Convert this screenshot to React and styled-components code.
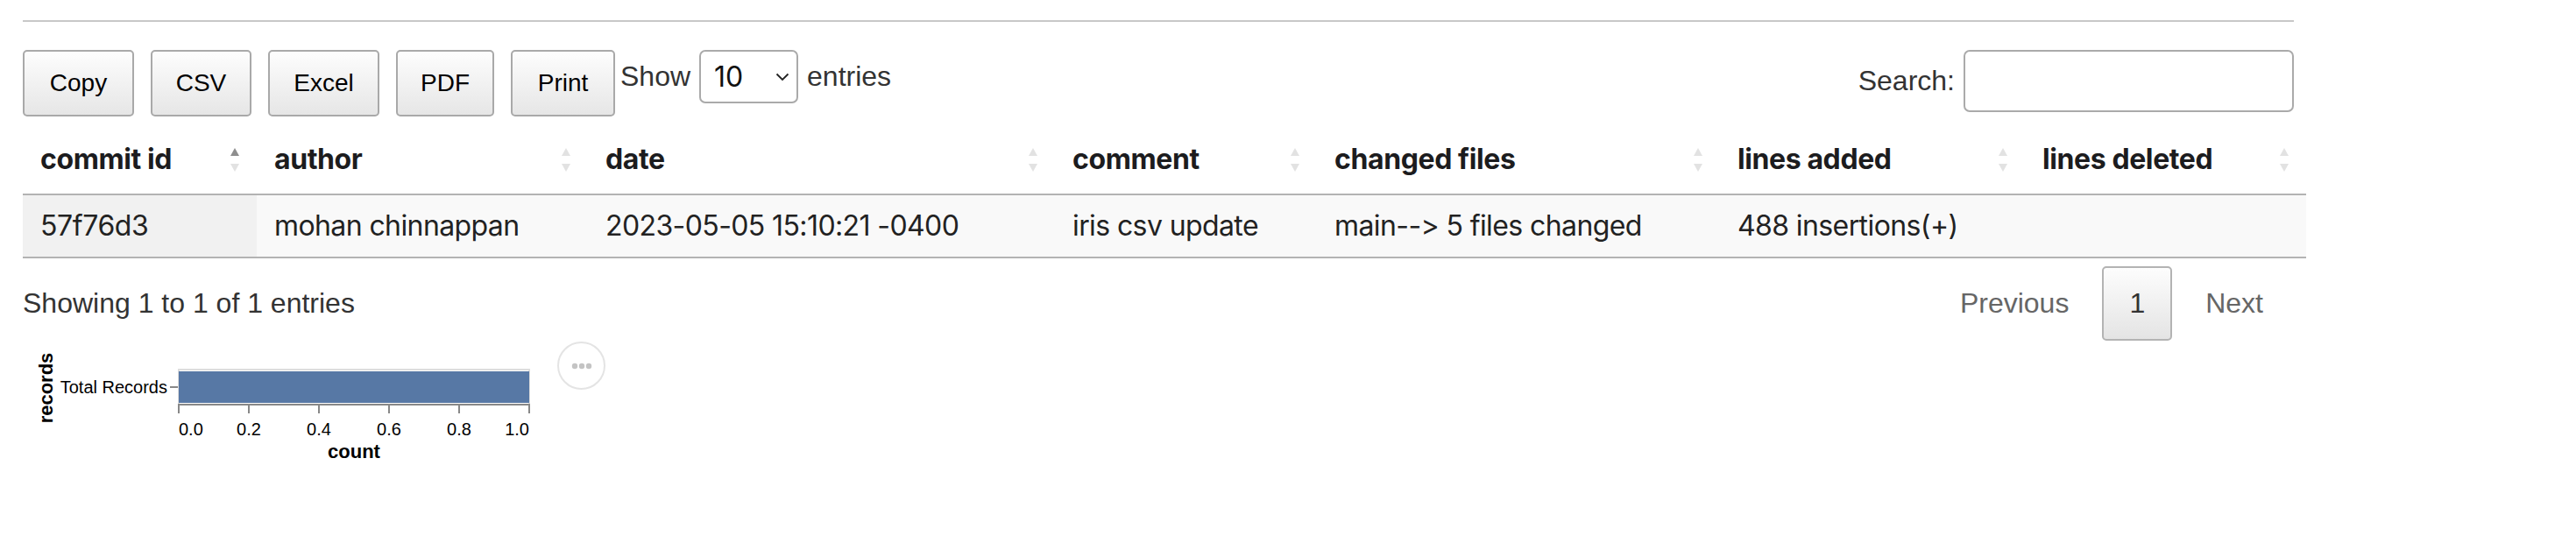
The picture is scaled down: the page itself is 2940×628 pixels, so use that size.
import React from 'react';
import styled, { createGlobalStyle } from 'styled-components';

const GlobalStyle = createGlobalStyle`
  html, body {
    margin: 0;
    padding: 0;
    background: #ffffff;
  }
  body {
    font-family: 'Liberation Sans', Arial, Helvetica, sans-serif;
    font-size: 32px;
    color: #333333;
  }
  * {
    box-sizing: border-box;
  }
`;

const Page = styled.div`
  width: 2592px;
  margin: 0 26px;
  padding-top: 23px;
`;

const Rule = styled.div`
  height: 2px;
  background: #c8c8c8;
`;

const Toolbar = styled.div`
  display: flex;
  justify-content: space-between;
  align-items: flex-start;
  margin-top: 32px;
`;

const LeftTools = styled.div`
  display: flex;
  align-items: flex-start;
`;

const ButtonGroup = styled.div`
  display: flex;
  gap: 19px;
  margin-right: 6px;
`;

const ExportButton = styled.button`
  width: ${props => props.width}px;
  font-family: 'Liberation Sans', Arial, Helvetica, sans-serif;
  font-size: 28px;
  line-height: 32px;
  color: #000000;
  padding: 20px 0;
  text-align: center;
  border: 2px solid #a9a9a9;
  border-radius: 5px;
  background: linear-gradient(to bottom, #fdfdfd 0%, #e6e6e6 100%);
  cursor: pointer;
`;

const LengthLabel = styled.label`
  display: flex;
  align-items: center;
  gap: 10px;
  height: 61px;
  color: #333333;
`;

const SelectBox = styled.div`
  display: flex;
  align-items: center;
  justify-content: space-between;
  width: 113px;
  height: 61px;
  padding: 0 8px 0 15px;
  border: 2px solid #aaaaaa;
  border-radius: 7px;
  background: #ffffff;
  font-family: Inter, 'Noto Sans', sans-serif;
  font-size: 32px;
  color: #111111;
`;

const SearchLabel = styled.label`
  display: flex;
  align-items: center;
  gap: 10px;
  color: #333333;
`;

const SearchInput = styled.input`
  width: 377px;
  height: 71px;
  border: 2px solid #aaaaaa;
  border-radius: 7px;
  padding: 6px 10px;
  font-size: 28px;
  background: #ffffff;
`;

const Table = styled.table`
  width: 2606px;
  margin-top: 10px;
  border-collapse: collapse;
  border-spacing: 0;
  table-layout: fixed;
  font-family: Inter, 'Noto Sans', sans-serif;
  font-size: 32px;
  letter-spacing: -0.4px;
  font-variant-ligatures: none;
  font-feature-settings: 'calt' 0, 'liga' 0;
  border-bottom: 2px solid #b3b3b3;
`;

const HeadCell = styled.th`
  width: ${props => props.width}px;
  padding: 20px 20px;
  line-height: 38px;
  text-align: left;
  font-weight: 700;
  color: #1c1c1e;
  border-bottom: 2px solid #b3b3b3;
`;

const HeadInner = styled.div`
  display: flex;
  align-items: center;
  justify-content: space-between;
`;

const SortIcon = styled.svg`
  flex: none;
  width: 10px;
  height: 27px;
`;

const Row = styled.tr`
  background: #f9f9f9;
`;

const Cell = styled.td`
  padding: 16px 20px;
  line-height: 38px;
  color: #222222;
  white-space: nowrap;
  letter-spacing: ${props => (props.sorted ? '-0.4px' : '-0.6px')};
  background: ${props => (props.sorted ? '#f1f1f1' : 'transparent')};
`;

const Footer = styled.div`
  display: flex;
  justify-content: space-between;
  align-items: flex-start;
  margin-top: 9px;
`;

const Info = styled.div`
  padding-top: 24px;
  color: #333333;
`;

const Pagination = styled.div`
  display: flex;
  gap: 7px;
  margin-right: 4px;
`;

const PageButton = styled.button`
  font-family: 'Liberation Sans', Arial, Helvetica, sans-serif;
  font-size: 32px;
  line-height: 37px;
  padding: 22px 29px;
  border-radius: 5px;
  border: 2px solid ${props => (props.current ? '#b3b3b3' : 'transparent')};
  color: ${props => (props.current ? '#333333' : '#666666')};
  background: ${props =>
    props.current
      ? 'linear-gradient(to bottom, #fdfdfd 0%, #e4e4e4 100%)'
      : 'transparent'};
`;

const ChartWrap = styled.div`
  display: flex;
  align-items: flex-start;
`;

const ActionsButton = styled.div`
  display: flex;
  align-items: center;
  justify-content: center;
  width: 55px;
  height: 55px;
  margin-top: 1px;
  border: 2px solid #e4e4e4;
  border-radius: 50%;
  background: #ffffff;
`;

const exportButtons = [
  { name: 'Copy', width: 127 },
  { name: 'CSV', width: 115 },
  { name: 'Excel', width: 127 },
  { name: 'PDF', width: 112 },
  { name: 'Print', width: 119 }
];

const columns = [
  { label: 'commit id', width: 267, sort: 'asc' },
  { label: 'author', width: 378 },
  { label: 'date', width: 533 },
  { label: 'comment', width: 299 },
  { label: 'changed files', width: 460 },
  { label: 'lines added', width: 348 },
  { label: 'lines deleted', width: 321 }
];

const rows = [
  [
    '57f76d3',
    'mohan chinnappan',
    '2023-05-05 15:10:21 -0400',
    'iris csv update',
    'main--> 5 files changed',
    '488 insertions(+)',
    ''
  ]
];

const Sort = ({ dir }) => (
  <SortIcon viewBox='0 0 10 27'>
    <polygon points='5,0 10,9 0,9' fill={dir === 'asc' ? '#8e8e8e' : '#e2e2e2'} />
    <polygon points='0,18 10,18 5,27' fill='#e2e2e2' />
  </SortIcon>
);

const ticks = [0, 0.2, 0.4, 0.6, 0.8, 1];

const Chart = () => (
  <svg width='610' height='145' viewBox='0 0 610 145'>
    <text
      transform='translate(34,54) rotate(-90)'
      textAnchor='middle'
      fontFamily="'Liberation Sans', Arial, sans-serif"
      fontSize='22'
      fontWeight='700'
      fill='#000'
    >
      records
    </text>
    <text
      x='165'
      y='60'
      textAnchor='end'
      fontFamily="'Liberation Sans', Arial, sans-serif"
      fontSize='20'
      fill='#000'
    >
      Total Records
    </text>
    <line x1='168' y1='53' x2='177' y2='53' stroke='#888' strokeWidth='2' />
    <rect x='178' y='33' width='400' height='40' fill='none' stroke='#ddd' strokeWidth='2' />
    <rect x='178' y='35' width='400' height='36' fill='#5778a5' />
    <line x1='177' y1='73' x2='579' y2='73' stroke='#888' strokeWidth='2' />
    {ticks.map((t, i) => (
      <g key={t}>
        <line
          x1={178 + i * 80}
          y1='73'
          x2={178 + i * 80}
          y2='83'
          stroke='#888'
          strokeWidth='2'
        />
        <text
          x={178 + i * 80}
          y='108'
          textAnchor={i === 0 ? 'start' : i === ticks.length - 1 ? 'end' : 'middle'}
          fontFamily="'Liberation Sans', Arial, sans-serif"
          fontSize='20'
          fill='#000'
        >
          {t.toFixed(1)}
        </text>
      </g>
    ))}
    <text
      x='378'
      y='134'
      textAnchor='middle'
      fontFamily="'Liberation Sans', Arial, sans-serif"
      fontSize='22'
      fontWeight='700'
      fill='#000'
    >
      count
    </text>
  </svg>
);

const App = () => {
  return (
    <>
      <GlobalStyle />
      <Page>
        <Rule />
        <Toolbar>
          <LeftTools>
            <ButtonGroup>
              {exportButtons.map(btn => (
                <ExportButton key={btn.name} width={btn.width}>
                  {btn.name}
                </ExportButton>
              ))}
            </ButtonGroup>
            <LengthLabel>
              Show
              <SelectBox>
                <span>10</span>
                <svg width='16' height='10' viewBox='0 0 16 10'>
                  <polyline
                    points='1.5,1.5 8,8 14.5,1.5'
                    fill='none'
                    stroke='#222'
                    strokeWidth='1.8'
                  />
                </svg>
              </SelectBox>
              entries
            </LengthLabel>
          </LeftTools>
          <SearchLabel>
            Search:
            <SearchInput type='search' />
          </SearchLabel>
        </Toolbar>
        <Table>
          <thead>
            <tr>
              {columns.map(col => (
                <HeadCell key={col.label} width={col.width}>
                  <HeadInner>
                    <span>{col.label}</span>
                    <Sort dir={col.sort} />
                  </HeadInner>
                </HeadCell>
              ))}
            </tr>
          </thead>
          <tbody>
            {rows.map(row => (
              <Row key={row[0]}>
                {row.map((value, i) => (
                  <Cell key={i} sorted={i === 0}>
                    {value}
                  </Cell>
                ))}
              </Row>
            ))}
          </tbody>
        </Table>
        <Footer>
          <Info>Showing 1 to 1 of 1 entries</Info>
          <Pagination>
            <PageButton>Previous</PageButton>
            <PageButton current>1</PageButton>
            <PageButton>Next</PageButton>
          </Pagination>
        </Footer>
        <ChartWrap>
          <Chart />
          <ActionsButton>
            <svg width='24' height='8' viewBox='0 0 24 8'>
              <circle cx='4' cy='4' r='3.2' fill='#c4c4c4' />
              <circle cx='12' cy='4' r='3.2' fill='#c4c4c4' />
              <circle cx='20' cy='4' r='3.2' fill='#c4c4c4' />
            </svg>
          </ActionsButton>
        </ChartWrap>
      </Page>
    </>
  );
};

export default App;
